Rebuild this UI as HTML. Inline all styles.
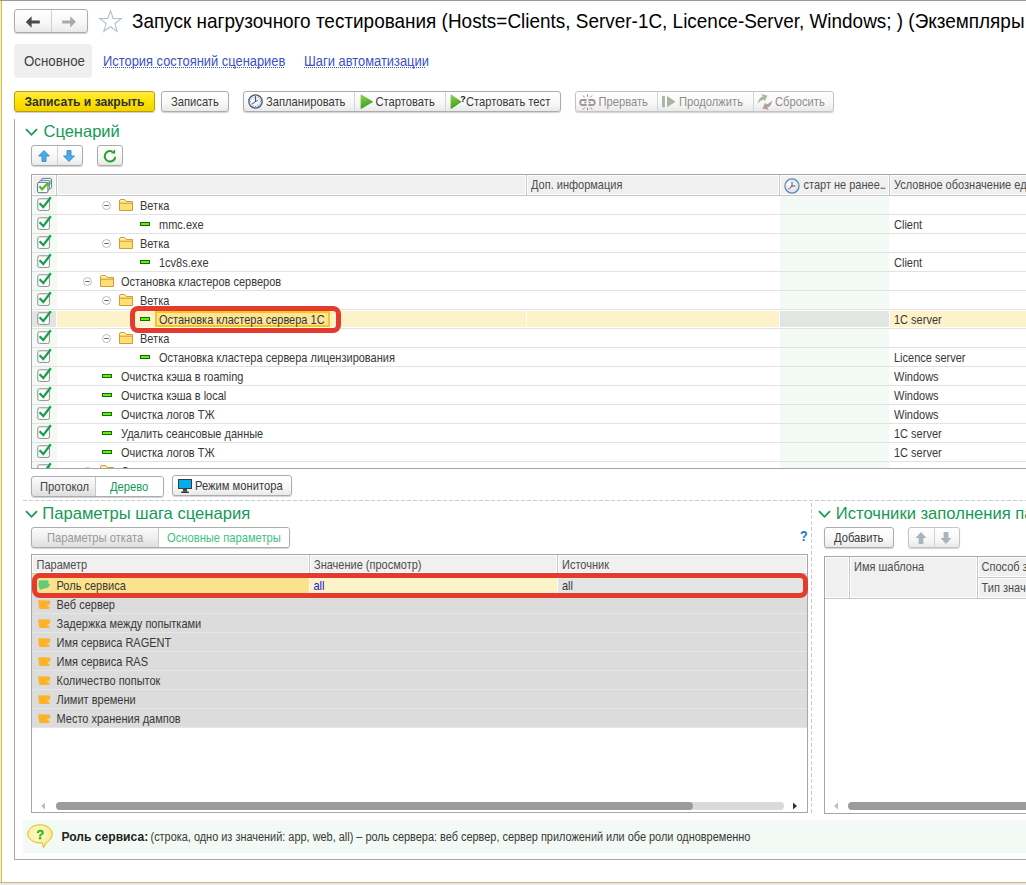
<!DOCTYPE html>
<html><head><meta charset="utf-8">
<style>
*{box-sizing:border-box;margin:0;padding:0}
html,body{width:1026px;height:885px;overflow:hidden;background:#fff}
body{position:relative;font-family:"Liberation Sans",sans-serif;font-size:11px;color:#333}
.a{position:absolute;white-space:nowrap}
svg.a{overflow:visible}
</style></head><body>
<div class="a" style="left:0px;top:0px;width:1026px;height:1px;background:#9a9a9a"></div>
<div class="a" style="left:0px;top:1px;width:1px;height:881px;background:#ffef9e"></div>
<div class="a" style="left:1px;top:1px;width:1px;height:881px;background:#cbba72"></div>
<div class="a" style="left:0px;top:882px;width:1026px;height:1px;background:#cbba72"></div>
<div class="a" style="left:0px;top:883px;width:1026px;height:2px;background:#e9e9ed"></div>
<div class="a" style="left:14px;top:9px;width:74px;height:24px;border:1px solid #acacac;border-radius:3px;background:linear-gradient(#ffffff 0%,#f7f7f7 60%,#e9e9e9 100%);box-shadow:0 1px 1px rgba(0,0,0,.18);"></div>
<div class="a" style="left:51px;top:10px;width:1px;height:22px;background:#d0d0d0"></div>
<svg class="a" style="left:25px;top:15.5px" width="16" height="12" viewBox="0 0 16 12"><path d="M0.8 6 L6.6 0.2 L6.6 4.5 L14.8 4.5 L14.8 7.4 L6.6 7.4 L6.6 11.8 Z" fill="#4a4a4a"/></svg>
<svg class="a" style="left:61px;top:15.5px" width="16" height="12" viewBox="0 0 16 12"><path d="M15 5.8 L9.2 0.2 L9.2 4.5 L1.2 4.5 L1.2 7.5 L9.2 7.5 L9.2 11.6 Z" fill="#a9a9a9"/></svg>
<svg class="a" style="left:98px;top:10px" width="26" height="23" viewBox="0 0 26 23"><path d="M12.50 0.70 L15.19 8.44 L23.38 8.60 L16.85 13.55 L19.22 21.40 L12.50 16.72 L5.78 21.40 L8.15 13.55 L1.62 8.60 L9.81 8.44 Z" fill="none" stroke="#b4bec8" stroke-width="1.1" stroke-linejoin="miter"/></svg>
<div class="a" style="left:132px;top:10.03px;font-size:18.95px;line-height:24px;color:#000;font-weight:normal;transform:scaleY(1.08);transform-origin:0 18.57px;">Запуск нагрузочного тестирования (Hosts=Clients, Server-1C, Licence-Server, Windows; ) (Экземпляры</div>
<div class="a" style="left:14px;top:44px;width:78px;height:34px;background:#efefef;border-radius:4px"></div>
<div class="a" style="left:24px;top:52.89px;font-size:13.3px;line-height:17px;color:#404040;font-weight:normal;transform:scaleY(1.1);transform-origin:0 13.11px;">Основное</div>
<div class="a" style="left:103px;top:53.03px;font-size:12.9px;line-height:17px;color:#3c50c6;font-weight:normal;transform:scaleY(1.1);transform-origin:0 12.97px;">История состояний сценариев</div>
<div class="a" style="left:103px;top:67px;width:181px;height:1px;background:repeating-linear-gradient(90deg,#3c50c6 0 1px,transparent 1px 2px)"></div>
<div class="a" style="left:304px;top:53.03px;font-size:12.9px;line-height:17px;color:#3c50c6;font-weight:normal;transform:scaleY(1.1);transform-origin:0 12.97px;">Шаги автоматизации</div>
<div class="a" style="left:304px;top:67px;width:122px;height:1px;background:repeating-linear-gradient(90deg,#3c50c6 0 1px,transparent 1px 2px)"></div>
<div class="a" style="left:14px;top:91px;width:141px;height:21px;border:1px solid #b9a000;border-radius:3px;background:linear-gradient(#feec48,#fde200 50%,#f2d300);box-shadow:0 1px 1px rgba(0,0,0,.2)"></div>
<div class="a" style="left:24.5px;top:93.81px;font-size:12.1px;line-height:16px;color:#30303a;font-weight:bold;transform:scaleY(1.12);transform-origin:0 12.19px;">Записать и закрыть</div>
<div class="a" style="left:161px;top:91px;width:68px;height:21px;border:1px solid #acacac;border-radius:3px;background:linear-gradient(#ffffff 0%,#f7f7f7 60%,#e9e9e9 100%);box-shadow:0 1px 1px rgba(0,0,0,.18);"></div>
<div class="a" style="left:171px;top:95.12px;font-size:11.2px;line-height:14px;color:#383838;font-weight:normal;transform:scaleY(1.12);transform-origin:0 10.88px;">Записать</div>
<div class="a" style="left:243px;top:91px;width:318px;height:21px;border:1px solid #acacac;border-radius:3px;background:linear-gradient(#ffffff 0%,#f7f7f7 60%,#e9e9e9 100%);box-shadow:0 1px 1px rgba(0,0,0,.18);"></div>
<div class="a" style="left:354px;top:92px;width:1px;height:19px;background:#d4d4d4"></div>
<div class="a" style="left:445px;top:92px;width:1px;height:19px;background:#d4d4d4"></div>
<svg class="a" style="left:248px;top:94px" width="15" height="15" viewBox="0 0 15 15"><defs><radialGradient id="clk" cx="0.35" cy="0.3" r="0.8"><stop offset="0" stop-color="#ffffff"/><stop offset="0.6" stop-color="#eef6fc"/><stop offset="1" stop-color="#bcd8ee"/></radialGradient></defs><circle cx="7.5" cy="7.5" r="6.7" fill="url(#clk)" stroke="#3e5d78" stroke-width="1.3"/><circle cx="12.60" cy="7.50" r="0.55" fill="#e04848"/><circle cx="11.92" cy="10.05" r="0.55" fill="#e04848"/><circle cx="10.05" cy="11.92" r="0.55" fill="#e04848"/><circle cx="7.50" cy="12.60" r="0.55" fill="#e04848"/><circle cx="4.95" cy="11.92" r="0.55" fill="#e04848"/><circle cx="3.08" cy="10.05" r="0.55" fill="#e04848"/><circle cx="2.40" cy="7.50" r="0.55" fill="#e04848"/><circle cx="3.08" cy="4.95" r="0.55" fill="#e04848"/><circle cx="4.95" cy="3.08" r="0.55" fill="#e04848"/><circle cx="7.50" cy="2.40" r="0.55" fill="#e04848"/><circle cx="10.05" cy="3.08" r="0.55" fill="#e04848"/><circle cx="11.92" cy="4.95" r="0.55" fill="#e04848"/><path d="M7.5 2.2 V7.9" stroke="#1f5f99" stroke-width="1.2"/><path d="M7.5 7.6 L3.8 10.2" stroke="#1f5f99" stroke-width="1"/><path d="M7.5 7.6 L10 6.2" stroke="#1f5f99" stroke-width="0.8"/></svg>
<div class="a" style="left:266px;top:95.12px;font-size:11.2px;line-height:14px;color:#383838;font-weight:normal;transform:scaleY(1.12);transform-origin:0 10.88px;">Запланировать</div>
<svg class="a" style="left:359.5px;top:93.8px" width="14" height="16" viewBox="0 0 14 16"><defs><linearGradient id="pg" x1="0" y1="0" x2="0.3" y2="1"><stop offset="0" stop-color="#8fd44a"/><stop offset="1" stop-color="#3e9e1e"/></linearGradient></defs><path d="M0.6 1.2 Q0.6 0.2 1.5 0.7 L12.6 7.2 Q13.4 7.7 12.6 8.2 L1.5 14.7 Q0.6 15.2 0.6 14.2 Z" fill="url(#pg)"/></svg>
<div class="a" style="left:375.5px;top:95.12px;font-size:11.2px;line-height:14px;color:#383838;font-weight:normal;transform:scaleY(1.12);transform-origin:0 10.88px;">Стартовать</div>
<svg class="a" style="left:449.5px;top:92px" width="18" height="18" viewBox="0 0 18 18"><path d="M0.6 3.2 Q0.6 2.2 1.5 2.7 L11 9.2 Q11.8 9.7 11 10.2 L1.5 16.7 Q0.6 17.2 0.6 16.2 Z" fill="url(#pg)"/><text x="10.2" y="9.8" font-family="Liberation Sans" font-weight="bold" font-size="9" fill="#111">?</text></svg>
<div class="a" style="left:466px;top:95.12px;font-size:11.2px;line-height:14px;color:#383838;font-weight:normal;transform:scaleY(1.12);transform-origin:0 10.88px;">Стартовать тест</div>
<div class="a" style="left:575px;top:91px;width:259px;height:21px;border:1px solid #c4c4c4;border-radius:3px;background:linear-gradient(#ffffff 0%,#f7f7f7 60%,#e9e9e9 100%);box-shadow:0 1px 1px rgba(0,0,0,.18);"></div>
<div class="a" style="left:657px;top:92px;width:1px;height:19px;background:#d4d4d4"></div>
<div class="a" style="left:753px;top:92px;width:1px;height:19px;background:#d4d4d4"></div>
<svg class="a" style="left:579px;top:94px" width="17" height="17" viewBox="0 0 17 17"><g stroke="#a07070" stroke-width="0.9"><path d="M8.5 0.5 V2.8"/><path d="M4 1.5 L5.6 3.3"/><path d="M13 1.5 L11.4 3.3"/><path d="M8.5 13.8 V16.2"/><path d="M4 15.5 L5.6 13.6"/><path d="M11.4 13.6 L13 15.5"/></g><path d="M7.6 6 H3.6 Q1.2 6 1.2 8.5 Q1.2 11 3.6 11 H7.6" fill="none" stroke="#9a9a9a" stroke-width="1.8"/><path d="M5.2 8.5 H7.5" stroke="#9a9a9a" stroke-width="1.6"/><path d="M9.4 6 H13.4 Q15.8 6 15.8 8.5 Q15.8 11 13.4 11 H9.4" fill="none" stroke="#9a9a9a" stroke-width="1.8"/><path d="M9.5 8.5 H11.8" stroke="#9a9a9a" stroke-width="1.6"/></svg>
<div class="a" style="left:598.5px;top:95.12px;font-size:11.2px;line-height:14px;color:#8c8c8c;font-weight:normal;transform:scaleY(1.12);transform-origin:0 10.88px;">Прервать</div>
<svg class="a" style="left:662px;top:95.7px" width="14" height="12" viewBox="0 0 14 12"><rect x="0" y="0.1" width="2.9" height="11.2" fill="#a9b5a2"/><path d="M5 0 L13.6 5.65 L5 11.3 Z" fill="#a9b5a2"/></svg>
<div class="a" style="left:679px;top:95.12px;font-size:11.2px;line-height:14px;color:#8c8c8c;font-weight:normal;transform:scaleY(1.12);transform-origin:0 10.88px;">Продолжить</div>
<svg class="a" style="left:757px;top:94px" width="16" height="16" viewBox="0 0 16 16"><path d="M0.8 9.6 Q1.6 3.4 5.9 2.5 L4.2 0 L10.4 1.4 L7.9 7.6 L7.1 5.4 Q3.6 6 0.8 9.6 Z" fill="#a8b9a0"/><path d="M15.2 6.4 Q14.4 12.6 10.1 13.5 L11.8 16 L5.6 14.6 L8.1 8.4 L8.9 10.6 Q12.4 10 15.2 6.4 Z" fill="#b29c9c"/></svg>
<div class="a" style="left:775px;top:95.12px;font-size:11.2px;line-height:14px;color:#8c8c8c;font-weight:normal;transform:scaleY(1.12);transform-origin:0 10.88px;">Сбросить</div>


<div class="a" style="left:14px;top:119px;width:1px;height:740px;background:#a8a8a8"></div>
<div class="a" style="left:14px;top:859px;width:1012px;height:1px;background:#a8a8a8"></div>
<svg class="a" style="left:25px;top:127.5px" width="13" height="9" viewBox="0 0 13 9"><path d="M1 1.2 L6.5 6.8 L12 1.2" fill="none" stroke="#139a55" stroke-width="1.8"/></svg>
<div class="a" style="left:43.5px;top:120.78px;font-size:16.5px;line-height:21px;color:#139a55;font-weight:normal;">Сценарий</div>
<div class="a" style="left:31px;top:145px;width:52px;height:21px;border:1px solid #acacac;border-radius:3px;background:linear-gradient(#ffffff 0%,#f7f7f7 60%,#e9e9e9 100%);box-shadow:0 1px 1px rgba(0,0,0,.18);"></div>
<div class="a" style="left:57px;top:146px;width:1px;height:19px;background:#d4d4d4"></div>
<svg class="a" style="left:38px;top:150px" width="12" height="12" viewBox="0 0 12 12"><path d="M6 0.6 L11.4 6 L8 6 L8 11.4 L4 11.4 L4 6 L0.6 6 Z" fill="#4aaee6" stroke="#2c86c8" stroke-width="0.9"/></svg>
<svg class="a" style="left:63px;top:150px" width="12" height="12" viewBox="0 0 12 12"><path d="M6 11.4 L11.4 6 L8 6 L8 0.6 L4 0.6 L4 6 L0.6 6 Z" fill="#4aaee6" stroke="#2c86c8" stroke-width="0.9"/></svg>
<div class="a" style="left:97px;top:145px;width:26px;height:21px;border:1px solid #acacac;border-radius:3px;background:linear-gradient(#ffffff 0%,#f7f7f7 60%,#e9e9e9 100%);box-shadow:0 1px 1px rgba(0,0,0,.18);"></div>
<svg class="a" style="left:103px;top:150px" width="14" height="13" viewBox="0 0 14 13"><path d="M12.3 6.9 A5.3 5.3 0 1 1 9.6 1.6" fill="none" stroke="#26a226" stroke-width="2"/><path d="M7.9 3.6 L12.1 3.6 L12.1 -0.4 Z" fill="#1e9e1e"/></svg>
<div class="a" style="left:31px;top:174px;width:1000px;height:295px;border:1px solid #a6a6a6;border-right:none;background:#fff;overflow:hidden"></div>
<div class="a" style="left:32px;top:175px;width:998px;height:20px;background:#fff"></div>
<div class="a" style="left:33px;top:176px;width:22px;height:18px;background:#f0f0f0"></div>
<div class="a" style="left:58px;top:176px;width:467px;height:18px;background:#f0f0f0"></div>
<div class="a" style="left:528px;top:176px;width:250px;height:18px;background:#f0f0f0"></div>
<div class="a" style="left:781px;top:176px;width:107px;height:18px;background:#f0f0f0"></div>
<div class="a" style="left:891px;top:176px;width:138px;height:18px;background:#f0f0f0"></div>
<div class="a" style="left:56px;top:175px;width:1px;height:20px;background:#c6c6c6"></div>
<div class="a" style="left:526px;top:175px;width:1px;height:20px;background:#c6c6c6"></div>
<div class="a" style="left:779px;top:175px;width:1px;height:20px;background:#c6c6c6"></div>
<div class="a" style="left:889px;top:175px;width:1px;height:20px;background:#c6c6c6"></div>
<div class="a" style="left:32px;top:195px;width:998px;height:1px;background:#c6c6c6"></div>
<svg class="a" style="left:37px;top:177px" width="16" height="17" viewBox="0 0 16 17"><rect x="4.5" y="1.4" width="10" height="10.2" rx="1.4" fill="#fff" stroke="#55738e" stroke-width="0.9"/><path d="M13.8 2.6 L13.8 7 L12.6 8.2 L12.6 4 Z" fill="#7cc860"/><rect x="2.6" y="3.3" width="9.8" height="9.9" rx="1.4" fill="#fff" stroke="#55738e" stroke-width="0.9"/><path d="M11.8 4.6 L11.8 9 L10.6 10.2 L10.6 6 Z" fill="#6cc050"/><rect x="0.6" y="5.3" width="10.3" height="10.4" rx="1.5" fill="#fff" stroke="#4f6e8a" stroke-width="1"/><path d="M2.4 9.2 L5.1 12.3 L11.2 5.8" fill="none" stroke="#4fba2e" stroke-width="2.3"/></svg>
<div class="a" style="left:531px;top:178.19px;font-size:11px;line-height:14px;color:#4d4d4d;font-weight:normal;transform:scaleY(1.12);transform-origin:0 10.81px;">Доп. информация</div>
<svg class="a" style="left:783.5px;top:177.5px" width="16" height="16" viewBox="0 0 16 16"><defs><radialGradient id="cg" cx="0.4" cy="0.35" r="0.7"><stop offset="0" stop-color="#ffffff"/><stop offset="1" stop-color="#c9e0f2"/></radialGradient></defs><circle cx="8" cy="8" r="7.1" fill="url(#cg)" stroke="#5a86aa" stroke-width="1.2"/><path d="M8 3.6 V8 H11.4" fill="none" stroke="#444" stroke-width="0.9"/><path d="M8 8 L4.6 11.3" stroke="#f01010" stroke-width="1.1" stroke-dasharray="1.2 0.6"/></svg>
<div class="a" style="left:803.5px;top:178.19px;font-size:11px;line-height:14px;color:#4d4d4d;font-weight:normal;transform:scaleY(1.12);transform-origin:0 10.81px;">старт не ранее<span style="letter-spacing:-1.5px">...</span></div>
<div class="a" style="left:894px;top:178.19px;font-size:11px;line-height:14px;color:#4d4d4d;font-weight:normal;transform:scaleY(1.12);transform-origin:0 10.81px;">Условное обозначение единицы</div>
<div class="a" style="left:32px;top:196px;width:25px;height:272px;background:#f3f9f4"></div>
<div class="a" style="left:780px;top:196px;width:109px;height:272px;background:#f3f9f4"></div>
<div class="a" style="left:32px;top:196px;width:994px;height:272px;overflow:hidden">
<svg class="a" style="left:5px;top:0px" width="15" height="15" viewBox="0 0 15 15"><rect x="0.8" y="2.8" width="11.6" height="11.6" rx="1.6" fill="#fff" stroke="#8c8c8c" stroke-width="1"/><path d="M2.6 7.3 L6.3 11.1 L13.8 1.3" fill="none" stroke="#12a04a" stroke-width="2.3"/></svg>
<svg class="a" style="left:70px;top:5px" width="9" height="9" viewBox="0 0 9 9"><circle cx="4.5" cy="4.5" r="4" fill="#fff" stroke="#bdbdbd" stroke-width="1"/><path d="M2.2 4.5 H6.8" stroke="#6a6a6a" stroke-width="1"/></svg>
<svg class="a" style="left:87px;top:3px" width="14" height="12" viewBox="0 0 14 12"><path d="M0.5 11.5 L0.5 2 Q0.5 0.5 2 0.5 L5.6 0.5 L7.4 2.5 L13.5 2.5 L13.5 11.5 Z" fill="#fedf72" stroke="#d49b3c" stroke-width="1"/><path d="M0.5 4.3 H13.5" stroke="#d49b3c" stroke-width="0.9"/><path d="M1.2 1.6 Q1.8 1.1 2.5 1.1 L5.2 1.1 L6.6 2.7 L1.2 2.7 Z" fill="#fff2b0"/></svg>
<div class="a" style="left:108px;top:3.19px;font-size:11px;line-height:14px;color:#383838;font-weight:normal;transform:scaleY(1.12);transform-origin:0 10.81px;">Ветка</div>
<div class="a" style="left:0px;top:18px;width:994px;height:1px;background:#e2e2e2"></div>
<svg class="a" style="left:5px;top:19px" width="15" height="15" viewBox="0 0 15 15"><rect x="0.8" y="2.8" width="11.6" height="11.6" rx="1.6" fill="#fff" stroke="#8c8c8c" stroke-width="1"/><path d="M2.6 7.3 L6.3 11.1 L13.8 1.3" fill="none" stroke="#12a04a" stroke-width="2.3"/></svg>
<div class="a" style="left:108px;top:26px;width:10px;height:4px;background:#62f000;border:1px solid #166a0e"></div>
<div class="a" style="left:127px;top:22.19px;font-size:11px;line-height:14px;color:#383838;font-weight:normal;transform:scaleY(1.12);transform-origin:0 10.81px;">mmc.exe</div>
<div class="a" style="left:862px;top:22.19px;font-size:11px;line-height:14px;color:#383838;font-weight:normal;transform:scaleY(1.12);transform-origin:0 10.81px;">Client</div>
<div class="a" style="left:0px;top:37px;width:994px;height:1px;background:#e2e2e2"></div>
<svg class="a" style="left:5px;top:38px" width="15" height="15" viewBox="0 0 15 15"><rect x="0.8" y="2.8" width="11.6" height="11.6" rx="1.6" fill="#fff" stroke="#8c8c8c" stroke-width="1"/><path d="M2.6 7.3 L6.3 11.1 L13.8 1.3" fill="none" stroke="#12a04a" stroke-width="2.3"/></svg>
<svg class="a" style="left:70px;top:43px" width="9" height="9" viewBox="0 0 9 9"><circle cx="4.5" cy="4.5" r="4" fill="#fff" stroke="#bdbdbd" stroke-width="1"/><path d="M2.2 4.5 H6.8" stroke="#6a6a6a" stroke-width="1"/></svg>
<svg class="a" style="left:87px;top:41px" width="14" height="12" viewBox="0 0 14 12"><path d="M0.5 11.5 L0.5 2 Q0.5 0.5 2 0.5 L5.6 0.5 L7.4 2.5 L13.5 2.5 L13.5 11.5 Z" fill="#fedf72" stroke="#d49b3c" stroke-width="1"/><path d="M0.5 4.3 H13.5" stroke="#d49b3c" stroke-width="0.9"/><path d="M1.2 1.6 Q1.8 1.1 2.5 1.1 L5.2 1.1 L6.6 2.7 L1.2 2.7 Z" fill="#fff2b0"/></svg>
<div class="a" style="left:108px;top:41.19px;font-size:11px;line-height:14px;color:#383838;font-weight:normal;transform:scaleY(1.12);transform-origin:0 10.81px;">Ветка</div>
<div class="a" style="left:0px;top:56px;width:994px;height:1px;background:#e2e2e2"></div>
<svg class="a" style="left:5px;top:57px" width="15" height="15" viewBox="0 0 15 15"><rect x="0.8" y="2.8" width="11.6" height="11.6" rx="1.6" fill="#fff" stroke="#8c8c8c" stroke-width="1"/><path d="M2.6 7.3 L6.3 11.1 L13.8 1.3" fill="none" stroke="#12a04a" stroke-width="2.3"/></svg>
<div class="a" style="left:108px;top:64px;width:10px;height:4px;background:#62f000;border:1px solid #166a0e"></div>
<div class="a" style="left:127px;top:60.19px;font-size:11px;line-height:14px;color:#383838;font-weight:normal;transform:scaleY(1.12);transform-origin:0 10.81px;">1cv8s.exe</div>
<div class="a" style="left:862px;top:60.19px;font-size:11px;line-height:14px;color:#383838;font-weight:normal;transform:scaleY(1.12);transform-origin:0 10.81px;">Client</div>
<div class="a" style="left:0px;top:75px;width:994px;height:1px;background:#e2e2e2"></div>
<svg class="a" style="left:5px;top:76px" width="15" height="15" viewBox="0 0 15 15"><rect x="0.8" y="2.8" width="11.6" height="11.6" rx="1.6" fill="#fff" stroke="#8c8c8c" stroke-width="1"/><path d="M2.6 7.3 L6.3 11.1 L13.8 1.3" fill="none" stroke="#12a04a" stroke-width="2.3"/></svg>
<svg class="a" style="left:51px;top:81px" width="9" height="9" viewBox="0 0 9 9"><circle cx="4.5" cy="4.5" r="4" fill="#fff" stroke="#bdbdbd" stroke-width="1"/><path d="M2.2 4.5 H6.8" stroke="#6a6a6a" stroke-width="1"/></svg>
<svg class="a" style="left:68px;top:79px" width="14" height="12" viewBox="0 0 14 12"><path d="M0.5 11.5 L0.5 2 Q0.5 0.5 2 0.5 L5.6 0.5 L7.4 2.5 L13.5 2.5 L13.5 11.5 Z" fill="#fedf72" stroke="#d49b3c" stroke-width="1"/><path d="M0.5 4.3 H13.5" stroke="#d49b3c" stroke-width="0.9"/><path d="M1.2 1.6 Q1.8 1.1 2.5 1.1 L5.2 1.1 L6.6 2.7 L1.2 2.7 Z" fill="#fff2b0"/></svg>
<div class="a" style="left:89px;top:79.19px;font-size:11px;line-height:14px;color:#383838;font-weight:normal;transform:scaleY(1.12);transform-origin:0 10.81px;">Остановка кластеров серверов</div>
<div class="a" style="left:0px;top:94px;width:994px;height:1px;background:#e2e2e2"></div>
<svg class="a" style="left:5px;top:95px" width="15" height="15" viewBox="0 0 15 15"><rect x="0.8" y="2.8" width="11.6" height="11.6" rx="1.6" fill="#fff" stroke="#8c8c8c" stroke-width="1"/><path d="M2.6 7.3 L6.3 11.1 L13.8 1.3" fill="none" stroke="#12a04a" stroke-width="2.3"/></svg>
<svg class="a" style="left:70px;top:100px" width="9" height="9" viewBox="0 0 9 9"><circle cx="4.5" cy="4.5" r="4" fill="#fff" stroke="#bdbdbd" stroke-width="1"/><path d="M2.2 4.5 H6.8" stroke="#6a6a6a" stroke-width="1"/></svg>
<svg class="a" style="left:87px;top:98px" width="14" height="12" viewBox="0 0 14 12"><path d="M0.5 11.5 L0.5 2 Q0.5 0.5 2 0.5 L5.6 0.5 L7.4 2.5 L13.5 2.5 L13.5 11.5 Z" fill="#fedf72" stroke="#d49b3c" stroke-width="1"/><path d="M0.5 4.3 H13.5" stroke="#d49b3c" stroke-width="0.9"/><path d="M1.2 1.6 Q1.8 1.1 2.5 1.1 L5.2 1.1 L6.6 2.7 L1.2 2.7 Z" fill="#fff2b0"/></svg>
<div class="a" style="left:108px;top:98.19px;font-size:11px;line-height:14px;color:#383838;font-weight:normal;transform:scaleY(1.12);transform-origin:0 10.81px;">Ветка</div>
<div class="a" style="left:0px;top:113px;width:994px;height:1px;background:#e2e2e2"></div>
<div class="a" style="left:0px;top:114px;width:994px;height:18px;background:#fff"></div>
<div class="a" style="left:0px;top:115px;width:24px;height:16px;background:#e2e6e2"></div>
<div class="a" style="left:25px;top:115px;width:469px;height:16px;background:#fdf2c9"></div>
<div class="a" style="left:495px;top:115px;width:252px;height:16px;background:#fdf2c9"></div>
<div class="a" style="left:748px;top:115px;width:109px;height:16px;background:#e2e6e2"></div>
<div class="a" style="left:858px;top:115px;width:140px;height:16px;background:#fdf2c9"></div>
<svg class="a" style="left:5px;top:114px" width="15" height="15" viewBox="0 0 15 15"><rect x="0.8" y="2.8" width="11.6" height="11.6" rx="1.6" fill="#fff" stroke="#8c8c8c" stroke-width="1"/><path d="M2.6 7.3 L6.3 11.1 L13.8 1.3" fill="none" stroke="#12a04a" stroke-width="2.3"/></svg>
<div class="a" style="left:108px;top:121px;width:10px;height:4px;background:#62f000;border:1px solid #166a0e"></div>
<div class="a" style="left:123px;top:115px;width:175px;height:16px;background:#fde497;border:2px solid #f6c81a"></div>
<div class="a" style="left:127px;top:117.19px;font-size:11px;line-height:14px;color:#383838;font-weight:normal;transform:scaleY(1.12);transform-origin:0 10.81px;">Остановка кластера сервера 1С</div>
<div class="a" style="left:862px;top:117.19px;font-size:11px;line-height:14px;color:#383838;font-weight:normal;transform:scaleY(1.12);transform-origin:0 10.81px;">1C server</div>
<div class="a" style="left:0px;top:132px;width:994px;height:1px;background:#e2e2e2"></div>
<svg class="a" style="left:5px;top:133px" width="15" height="15" viewBox="0 0 15 15"><rect x="0.8" y="2.8" width="11.6" height="11.6" rx="1.6" fill="#fff" stroke="#8c8c8c" stroke-width="1"/><path d="M2.6 7.3 L6.3 11.1 L13.8 1.3" fill="none" stroke="#12a04a" stroke-width="2.3"/></svg>
<svg class="a" style="left:70px;top:138px" width="9" height="9" viewBox="0 0 9 9"><circle cx="4.5" cy="4.5" r="4" fill="#fff" stroke="#bdbdbd" stroke-width="1"/><path d="M2.2 4.5 H6.8" stroke="#6a6a6a" stroke-width="1"/></svg>
<svg class="a" style="left:87px;top:136px" width="14" height="12" viewBox="0 0 14 12"><path d="M0.5 11.5 L0.5 2 Q0.5 0.5 2 0.5 L5.6 0.5 L7.4 2.5 L13.5 2.5 L13.5 11.5 Z" fill="#fedf72" stroke="#d49b3c" stroke-width="1"/><path d="M0.5 4.3 H13.5" stroke="#d49b3c" stroke-width="0.9"/><path d="M1.2 1.6 Q1.8 1.1 2.5 1.1 L5.2 1.1 L6.6 2.7 L1.2 2.7 Z" fill="#fff2b0"/></svg>
<div class="a" style="left:108px;top:136.19px;font-size:11px;line-height:14px;color:#383838;font-weight:normal;transform:scaleY(1.12);transform-origin:0 10.81px;">Ветка</div>
<div class="a" style="left:0px;top:151px;width:994px;height:1px;background:#e2e2e2"></div>
<svg class="a" style="left:5px;top:152px" width="15" height="15" viewBox="0 0 15 15"><rect x="0.8" y="2.8" width="11.6" height="11.6" rx="1.6" fill="#fff" stroke="#8c8c8c" stroke-width="1"/><path d="M2.6 7.3 L6.3 11.1 L13.8 1.3" fill="none" stroke="#12a04a" stroke-width="2.3"/></svg>
<div class="a" style="left:108px;top:159px;width:10px;height:4px;background:#62f000;border:1px solid #166a0e"></div>
<div class="a" style="left:127px;top:155.19px;font-size:11px;line-height:14px;color:#383838;font-weight:normal;transform:scaleY(1.12);transform-origin:0 10.81px;">Остановка кластера сервера лицензирования</div>
<div class="a" style="left:862px;top:155.19px;font-size:11px;line-height:14px;color:#383838;font-weight:normal;transform:scaleY(1.12);transform-origin:0 10.81px;">Licence server</div>
<div class="a" style="left:0px;top:170px;width:994px;height:1px;background:#e2e2e2"></div>
<svg class="a" style="left:5px;top:171px" width="15" height="15" viewBox="0 0 15 15"><rect x="0.8" y="2.8" width="11.6" height="11.6" rx="1.6" fill="#fff" stroke="#8c8c8c" stroke-width="1"/><path d="M2.6 7.3 L6.3 11.1 L13.8 1.3" fill="none" stroke="#12a04a" stroke-width="2.3"/></svg>
<div class="a" style="left:70px;top:178px;width:10px;height:4px;background:#62f000;border:1px solid #166a0e"></div>
<div class="a" style="left:89px;top:174.19px;font-size:11px;line-height:14px;color:#383838;font-weight:normal;transform:scaleY(1.12);transform-origin:0 10.81px;">Очистка кэша в roaming</div>
<div class="a" style="left:862px;top:174.19px;font-size:11px;line-height:14px;color:#383838;font-weight:normal;transform:scaleY(1.12);transform-origin:0 10.81px;">Windows</div>
<div class="a" style="left:0px;top:189px;width:994px;height:1px;background:#e2e2e2"></div>
<svg class="a" style="left:5px;top:190px" width="15" height="15" viewBox="0 0 15 15"><rect x="0.8" y="2.8" width="11.6" height="11.6" rx="1.6" fill="#fff" stroke="#8c8c8c" stroke-width="1"/><path d="M2.6 7.3 L6.3 11.1 L13.8 1.3" fill="none" stroke="#12a04a" stroke-width="2.3"/></svg>
<div class="a" style="left:70px;top:197px;width:10px;height:4px;background:#62f000;border:1px solid #166a0e"></div>
<div class="a" style="left:89px;top:193.19px;font-size:11px;line-height:14px;color:#383838;font-weight:normal;transform:scaleY(1.12);transform-origin:0 10.81px;">Очистка кэша в local</div>
<div class="a" style="left:862px;top:193.19px;font-size:11px;line-height:14px;color:#383838;font-weight:normal;transform:scaleY(1.12);transform-origin:0 10.81px;">Windows</div>
<div class="a" style="left:0px;top:208px;width:994px;height:1px;background:#e2e2e2"></div>
<svg class="a" style="left:5px;top:209px" width="15" height="15" viewBox="0 0 15 15"><rect x="0.8" y="2.8" width="11.6" height="11.6" rx="1.6" fill="#fff" stroke="#8c8c8c" stroke-width="1"/><path d="M2.6 7.3 L6.3 11.1 L13.8 1.3" fill="none" stroke="#12a04a" stroke-width="2.3"/></svg>
<div class="a" style="left:70px;top:216px;width:10px;height:4px;background:#62f000;border:1px solid #166a0e"></div>
<div class="a" style="left:89px;top:212.19px;font-size:11px;line-height:14px;color:#383838;font-weight:normal;transform:scaleY(1.12);transform-origin:0 10.81px;">Очистка логов ТЖ</div>
<div class="a" style="left:862px;top:212.19px;font-size:11px;line-height:14px;color:#383838;font-weight:normal;transform:scaleY(1.12);transform-origin:0 10.81px;">Windows</div>
<div class="a" style="left:0px;top:227px;width:994px;height:1px;background:#e2e2e2"></div>
<svg class="a" style="left:5px;top:228px" width="15" height="15" viewBox="0 0 15 15"><rect x="0.8" y="2.8" width="11.6" height="11.6" rx="1.6" fill="#fff" stroke="#8c8c8c" stroke-width="1"/><path d="M2.6 7.3 L6.3 11.1 L13.8 1.3" fill="none" stroke="#12a04a" stroke-width="2.3"/></svg>
<div class="a" style="left:70px;top:235px;width:10px;height:4px;background:#62f000;border:1px solid #166a0e"></div>
<div class="a" style="left:89px;top:231.19px;font-size:11px;line-height:14px;color:#383838;font-weight:normal;transform:scaleY(1.12);transform-origin:0 10.81px;">Удалить сеансовые данные</div>
<div class="a" style="left:862px;top:231.19px;font-size:11px;line-height:14px;color:#383838;font-weight:normal;transform:scaleY(1.12);transform-origin:0 10.81px;">1C server</div>
<div class="a" style="left:0px;top:246px;width:994px;height:1px;background:#e2e2e2"></div>
<svg class="a" style="left:5px;top:247px" width="15" height="15" viewBox="0 0 15 15"><rect x="0.8" y="2.8" width="11.6" height="11.6" rx="1.6" fill="#fff" stroke="#8c8c8c" stroke-width="1"/><path d="M2.6 7.3 L6.3 11.1 L13.8 1.3" fill="none" stroke="#12a04a" stroke-width="2.3"/></svg>
<div class="a" style="left:70px;top:254px;width:10px;height:4px;background:#62f000;border:1px solid #166a0e"></div>
<div class="a" style="left:89px;top:250.19px;font-size:11px;line-height:14px;color:#383838;font-weight:normal;transform:scaleY(1.12);transform-origin:0 10.81px;">Очистка логов ТЖ</div>
<div class="a" style="left:862px;top:250.19px;font-size:11px;line-height:14px;color:#383838;font-weight:normal;transform:scaleY(1.12);transform-origin:0 10.81px;">1C server</div>
<div class="a" style="left:0px;top:265px;width:994px;height:1px;background:#e2e2e2"></div>
<svg class="a" style="left:5px;top:266px" width="15" height="15" viewBox="0 0 15 15"><rect x="0.8" y="2.8" width="11.6" height="11.6" rx="1.6" fill="#fff" stroke="#8c8c8c" stroke-width="1"/><path d="M2.6 7.3 L6.3 11.1 L13.8 1.3" fill="none" stroke="#12a04a" stroke-width="2.3"/></svg>
<svg class="a" style="left:51px;top:271px" width="9" height="9" viewBox="0 0 9 9"><circle cx="4.5" cy="4.5" r="4" fill="#fff" stroke="#bdbdbd" stroke-width="1"/><path d="M2.2 4.5 H6.8" stroke="#6a6a6a" stroke-width="1"/></svg>
<svg class="a" style="left:68px;top:269px" width="14" height="12" viewBox="0 0 14 12"><path d="M0.5 11.5 L0.5 2 Q0.5 0.5 2 0.5 L5.6 0.5 L7.4 2.5 L13.5 2.5 L13.5 11.5 Z" fill="#fedf72" stroke="#d49b3c" stroke-width="1"/><path d="M0.5 4.3 H13.5" stroke="#d49b3c" stroke-width="0.9"/><path d="M1.2 1.6 Q1.8 1.1 2.5 1.1 L5.2 1.1 L6.6 2.7 L1.2 2.7 Z" fill="#fff2b0"/></svg>
<div class="a" style="left:89px;top:269.19px;font-size:11px;line-height:14px;color:#383838;font-weight:normal;transform:scaleY(1.12);transform-origin:0 10.81px;">Остановка</div>
<div class="a" style="left:0px;top:284px;width:994px;height:1px;background:#e2e2e2"></div>
</div>
<div class="a" style="left:130px;top:306px;width:211px;height:27px;border:5px solid #e43b2f;border-radius:8px"></div>
<div class="a" style="left:31px;top:476px;width:133px;height:21px;border:1px solid #acacac;border-radius:3px;background:linear-gradient(#ffffff 0%,#f7f7f7 60%,#e9e9e9 100%);box-shadow:0 1px 1px rgba(0,0,0,.18);background:linear-gradient(#fbfbfb,#efefef 50%,#dedede)"></div>
<div class="a" style="left:95px;top:477px;width:68px;height:19px;background:#fff;border-radius:0 2px 2px 0"></div>
<div class="a" style="left:95px;top:477px;width:1px;height:19px;background:#c8c8c8"></div>
<div class="a" style="left:40px;top:480.12px;font-size:11.2px;line-height:14px;color:#444;font-weight:normal;transform:scaleY(1.12);transform-origin:0 10.88px;">Протокол</div>
<div class="a" style="left:110px;top:480.12px;font-size:11.2px;line-height:14px;color:#139a55;font-weight:normal;transform:scaleY(1.12);transform-origin:0 10.88px;">Дерево</div>
<div class="a" style="left:172px;top:475px;width:120px;height:21px;border:1px solid #acacac;border-radius:3px;background:linear-gradient(#ffffff 0%,#f7f7f7 60%,#e9e9e9 100%);box-shadow:0 1px 1px rgba(0,0,0,.18);"></div>
<svg class="a" style="left:178px;top:479px" width="14" height="14" viewBox="0 0 14 14"><rect x="0.5" y="0.5" width="13" height="9" fill="#00aeef" stroke="#3c3c3c" stroke-width="1"/><rect x="5" y="10" width="4" height="2.6" fill="#444"/><rect x="3" y="12.4" width="8" height="1.6" rx="0.8" fill="#333"/></svg>
<div class="a" style="left:195px;top:479.12px;font-size:11.2px;line-height:14px;color:#383838;font-weight:normal;transform:scaleY(1.12);transform-origin:0 10.88px;">Режим монитора</div>
<div class="a" style="left:23px;top:500px;width:1003px;height:1px;background:repeating-linear-gradient(90deg,#cbcbcb 0 4px,transparent 4px 6px)"></div>
<div class="a" style="left:811px;top:503px;width:1px;height:312px;background:repeating-linear-gradient(180deg,#cbcbcb 0 4px,transparent 4px 6px)"></div>
<svg class="a" style="left:25px;top:509.5px" width="13" height="9" viewBox="0 0 13 9"><path d="M1 1.2 L6.5 6.8 L12 1.2" fill="none" stroke="#139a55" stroke-width="1.8"/></svg>
<div class="a" style="left:42.3px;top:502.75px;font-size:16.6px;line-height:21px;color:#139a55;font-weight:normal;">Параметры шага сценария</div>
<div class="a" style="left:31px;top:527px;width:259px;height:21px;border:1px solid #acacac;border-radius:3px;background:linear-gradient(#ffffff 0%,#f7f7f7 60%,#e9e9e9 100%);box-shadow:0 1px 1px rgba(0,0,0,.18);background:linear-gradient(#fbfbfb,#efefef 50%,#dedede)"></div>
<div class="a" style="left:158px;top:528px;width:131px;height:19px;background:#fff;border-radius:0 2px 2px 0"></div>
<div class="a" style="left:158px;top:528px;width:1px;height:19px;background:#c8c8c8"></div>
<div class="a" style="left:47px;top:531.12px;font-size:11.2px;line-height:14px;color:#999;font-weight:normal;transform:scaleY(1.12);transform-origin:0 10.88px;">Параметры отката</div>
<div class="a" style="left:167px;top:531.12px;font-size:11.2px;line-height:14px;color:#3fbf7f;font-weight:normal;transform:scaleY(1.12);transform-origin:0 10.88px;">Основные параметры</div>
<div class="a" style="left:800px;top:528.67px;font-size:12.5px;line-height:16px;color:#1a78c8;font-weight:bold;transform:scaleY(1.12);transform-origin:0 12.33px;">?</div>
<div class="a" style="left:31px;top:554px;width:777px;height:259px;border:1px solid #a6a6a6;background:#fff"></div>
<div class="a" style="left:32px;top:555px;width:775px;height:18px;background:#fff"></div>
<div class="a" style="left:33px;top:556px;width:275px;height:16px;background:#f0f0f0"></div>
<div class="a" style="left:311px;top:556px;width:245px;height:16px;background:#f0f0f0"></div>
<div class="a" style="left:559px;top:556px;width:247px;height:16px;background:#f0f0f0"></div>
<div class="a" style="left:309px;top:555px;width:1px;height:18px;background:#c6c6c6"></div>
<div class="a" style="left:557px;top:555px;width:1px;height:18px;background:#c6c6c6"></div>
<div class="a" style="left:32px;top:573px;width:775px;height:1px;background:#c6c6c6"></div>
<div class="a" style="left:36.5px;top:557.69px;font-size:11px;line-height:14px;color:#4d4d4d;font-weight:normal;transform:scaleY(1.12);transform-origin:0 10.81px;">Параметр</div>
<div class="a" style="left:314px;top:557.69px;font-size:11px;line-height:14px;color:#4d4d4d;font-weight:normal;transform:scaleY(1.12);transform-origin:0 10.81px;">Значение (просмотр)</div>
<div class="a" style="left:562px;top:557.69px;font-size:11px;line-height:14px;color:#4d4d4d;font-weight:normal;transform:scaleY(1.12);transform-origin:0 10.81px;">Источник</div>
<div class="a" style="left:32px;top:574px;width:277px;height:21px;background:#fde28e"></div>
<div class="a" style="left:310px;top:574px;width:247px;height:21px;background:#fdf2c8"></div>
<div class="a" style="left:558px;top:574px;width:249px;height:21px;background:#e2e5e3"></div>
<div class="a" style="left:309px;top:574px;width:1px;height:21px;background:#fff"></div>
<div class="a" style="left:557px;top:574px;width:1px;height:21px;background:#fff"></div>
<svg class="a" style="left:38px;top:580px" width="13" height="10" viewBox="0 0 13 10"><path d="M0.6 0.6 L10.3 0.2 L10.6 3.8 L12.6 5 L10.6 6.2 L10.3 7.6 L3.5 9.2 L1.8 9.9 L1.2 7.2 L0 6.6 L1 5.6 L0 4 L0.9 3.2 Z" fill="#5fcc7c"/></svg>
<div class="a" style="left:56.5px;top:579.19px;font-size:11px;line-height:14px;color:#383838;font-weight:normal;transform:scaleY(1.12);transform-origin:0 10.81px;">Роль сервиса</div>
<div class="a" style="left:32px;top:595px;width:775px;height:19px;background:#dcdcdc"></div>
<div class="a" style="left:32px;top:613px;width:775px;height:1px;background:#e6e6e6"></div>
<svg class="a" style="left:38px;top:600px" width="13" height="10" viewBox="0 0 13 10"><path d="M0.2 0.2 L11.6 0.4 L12.8 2.2 L11.6 3.4 L12.2 4.6 L8.6 5.4 L11.8 7.2 L11 9 L1.6 9 L0.8 7.2 Z" fill="#fdb227"/></svg>
<div class="a" style="left:56.5px;top:598.19px;font-size:11px;line-height:14px;color:#383838;font-weight:normal;transform:scaleY(1.12);transform-origin:0 10.81px;">Веб сервер</div>
<div class="a" style="left:32px;top:614px;width:775px;height:19px;background:#dcdcdc"></div>
<div class="a" style="left:32px;top:632px;width:775px;height:1px;background:#e6e6e6"></div>
<svg class="a" style="left:38px;top:619px" width="13" height="10" viewBox="0 0 13 10"><path d="M0.2 0.2 L11.6 0.4 L12.8 2.2 L11.6 3.4 L12.2 4.6 L8.6 5.4 L11.8 7.2 L11 9 L1.6 9 L0.8 7.2 Z" fill="#fdb227"/></svg>
<div class="a" style="left:56.5px;top:617.19px;font-size:11px;line-height:14px;color:#383838;font-weight:normal;transform:scaleY(1.12);transform-origin:0 10.81px;">Задержка между попытками</div>
<div class="a" style="left:32px;top:633px;width:775px;height:19px;background:#dcdcdc"></div>
<div class="a" style="left:32px;top:651px;width:775px;height:1px;background:#e6e6e6"></div>
<svg class="a" style="left:38px;top:638px" width="13" height="10" viewBox="0 0 13 10"><path d="M0.2 0.2 L11.6 0.4 L12.8 2.2 L11.6 3.4 L12.2 4.6 L8.6 5.4 L11.8 7.2 L11 9 L1.6 9 L0.8 7.2 Z" fill="#fdb227"/></svg>
<div class="a" style="left:56.5px;top:636.19px;font-size:11px;line-height:14px;color:#383838;font-weight:normal;transform:scaleY(1.12);transform-origin:0 10.81px;">Имя сервиса RAGENT</div>
<div class="a" style="left:32px;top:652px;width:775px;height:19px;background:#dcdcdc"></div>
<div class="a" style="left:32px;top:670px;width:775px;height:1px;background:#e6e6e6"></div>
<svg class="a" style="left:38px;top:657px" width="13" height="10" viewBox="0 0 13 10"><path d="M0.2 0.2 L11.6 0.4 L12.8 2.2 L11.6 3.4 L12.2 4.6 L8.6 5.4 L11.8 7.2 L11 9 L1.6 9 L0.8 7.2 Z" fill="#fdb227"/></svg>
<div class="a" style="left:56.5px;top:655.19px;font-size:11px;line-height:14px;color:#383838;font-weight:normal;transform:scaleY(1.12);transform-origin:0 10.81px;">Имя сервиса RAS</div>
<div class="a" style="left:32px;top:671px;width:775px;height:19px;background:#dcdcdc"></div>
<div class="a" style="left:32px;top:689px;width:775px;height:1px;background:#e6e6e6"></div>
<svg class="a" style="left:38px;top:676px" width="13" height="10" viewBox="0 0 13 10"><path d="M0.2 0.2 L11.6 0.4 L12.8 2.2 L11.6 3.4 L12.2 4.6 L8.6 5.4 L11.8 7.2 L11 9 L1.6 9 L0.8 7.2 Z" fill="#fdb227"/></svg>
<div class="a" style="left:56.5px;top:674.19px;font-size:11px;line-height:14px;color:#383838;font-weight:normal;transform:scaleY(1.12);transform-origin:0 10.81px;">Количество попыток</div>
<div class="a" style="left:32px;top:690px;width:775px;height:19px;background:#dcdcdc"></div>
<div class="a" style="left:32px;top:708px;width:775px;height:1px;background:#e6e6e6"></div>
<svg class="a" style="left:38px;top:695px" width="13" height="10" viewBox="0 0 13 10"><path d="M0.2 0.2 L11.6 0.4 L12.8 2.2 L11.6 3.4 L12.2 4.6 L8.6 5.4 L11.8 7.2 L11 9 L1.6 9 L0.8 7.2 Z" fill="#fdb227"/></svg>
<div class="a" style="left:56.5px;top:693.19px;font-size:11px;line-height:14px;color:#383838;font-weight:normal;transform:scaleY(1.12);transform-origin:0 10.81px;">Лимит времени</div>
<div class="a" style="left:32px;top:709px;width:775px;height:19px;background:#dcdcdc"></div>
<div class="a" style="left:32px;top:727px;width:775px;height:1px;background:#e6e6e6"></div>
<svg class="a" style="left:38px;top:714px" width="13" height="10" viewBox="0 0 13 10"><path d="M0.2 0.2 L11.6 0.4 L12.8 2.2 L11.6 3.4 L12.2 4.6 L8.6 5.4 L11.8 7.2 L11 9 L1.6 9 L0.8 7.2 Z" fill="#fdb227"/></svg>
<div class="a" style="left:56.5px;top:712.19px;font-size:11px;line-height:14px;color:#383838;font-weight:normal;transform:scaleY(1.12);transform-origin:0 10.81px;">Место хранения дампов</div>
<div class="a" style="left:313.5px;top:579.19px;font-size:11px;line-height:14px;color:#1a1acc;font-weight:normal;transform:scaleY(1.12);transform-origin:0 10.81px;">all</div>
<div class="a" style="left:562px;top:579.19px;font-size:11px;line-height:14px;color:#383838;font-weight:normal;transform:scaleY(1.12);transform-origin:0 10.81px;">all</div>
<div class="a" style="left:32px;top:573px;width:776px;height:25px;border:5px solid #e43b2f;border-radius:8px"></div>
<svg class="a" style="left:40px;top:802px" width="6" height="8" viewBox="0 0 6 8"><path d="M5 0.5 L1 4 L5 7.5 Z" fill="#bdbdbd"/></svg>
<div class="a" style="left:56px;top:802px;width:728px;height:8px;background:#dadada;border-radius:4px"></div>
<div class="a" style="left:56px;top:802px;width:637px;height:8px;background:#9b9b9b;border-radius:4px"></div>
<svg class="a" style="left:792px;top:802px" width="6" height="8" viewBox="0 0 6 8"><path d="M1 0.5 L5 4 L1 7.5 Z" fill="#333"/></svg>
<svg class="a" style="left:818px;top:509.5px" width="13" height="9" viewBox="0 0 13 9"><path d="M1 1.2 L6.5 6.8 L12 1.2" fill="none" stroke="#139a55" stroke-width="1.8"/></svg>
<div class="a" style="left:835.8px;top:502.75px;font-size:16.6px;line-height:21px;color:#139a55;font-weight:normal;">Источники заполнения параметров</div>
<div class="a" style="left:824px;top:527px;width:70px;height:21px;border:1px solid #acacac;border-radius:3px;background:linear-gradient(#ffffff 0%,#f7f7f7 60%,#e9e9e9 100%);box-shadow:0 1px 1px rgba(0,0,0,.18);"></div>
<div class="a" style="left:834px;top:531.12px;font-size:11.2px;line-height:14px;color:#383838;font-weight:normal;transform:scaleY(1.12);transform-origin:0 10.88px;">Добавить</div>
<div class="a" style="left:908px;top:527px;width:52px;height:21px;border:1px solid #c4c4c4;border-radius:3px;background:linear-gradient(#ffffff 0%,#f7f7f7 60%,#e9e9e9 100%);box-shadow:0 1px 1px rgba(0,0,0,.18);"></div>
<div class="a" style="left:934px;top:528px;width:1px;height:19px;background:#d4d4d4"></div>
<svg class="a" style="left:914.5px;top:532px" width="12" height="12" viewBox="0 0 12 12"><path d="M6 0 L11.5 6 L8.4 6 L8.4 12 L3.6 12 L3.6 6 L0.5 6 Z" fill="#a9b5bd"/></svg>
<svg class="a" style="left:939.5px;top:532px" width="12" height="12" viewBox="0 0 12 12"><path d="M6 12 L11.5 6 L8.4 6 L8.4 0 L3.6 0 L3.6 6 L0.5 6 Z" fill="#a9b5bd"/></svg>
<div class="a" style="left:824px;top:556px;width:210px;height:258px;border:1px solid #a6a6a6;border-right:none;background:#fff"></div>
<div class="a" style="left:825px;top:557px;width:205px;height:41px;background:#fff"></div>
<div class="a" style="left:826px;top:558px;width:22px;height:39px;background:#f0f0f0"></div>
<div class="a" style="left:851px;top:558px;width:125px;height:39px;background:#f0f0f0"></div>
<div class="a" style="left:979px;top:558px;width:50px;height:39px;background:#f0f0f0"></div>
<div class="a" style="left:849px;top:557px;width:1px;height:41px;background:#c6c6c6"></div>
<div class="a" style="left:977px;top:557px;width:1px;height:41px;background:#c6c6c6"></div>
<div class="a" style="left:825px;top:598px;width:205px;height:1px;background:#c6c6c6"></div>
<div class="a" style="left:978px;top:576px;width:50px;height:1px;background:#fff"></div>
<div class="a" style="left:978px;top:577px;width:50px;height:1px;background:#c6c6c6"></div>
<div class="a" style="left:978px;top:578px;width:50px;height:1px;background:#fff"></div>
<div class="a" style="left:854px;top:559.69px;font-size:11px;line-height:14px;color:#4d4d4d;font-weight:normal;transform:scaleY(1.12);transform-origin:0 10.81px;">Имя шаблона</div>
<div class="a" style="left:981.5px;top:559.69px;font-size:11px;line-height:14px;color:#4d4d4d;font-weight:normal;transform:scaleY(1.12);transform-origin:0 10.81px;">Способ заполнения</div>
<div class="a" style="left:981.5px;top:581.19px;font-size:11px;line-height:14px;color:#4d4d4d;font-weight:normal;transform:scaleY(1.12);transform-origin:0 10.81px;">Тип значения</div>
<svg class="a" style="left:833px;top:802px" width="6" height="8" viewBox="0 0 6 8"><path d="M5 0.5 L1 4 L5 7.5 Z" fill="#bdbdbd"/></svg>
<div class="a" style="left:848px;top:802px;width:200px;height:8px;background:#9b9b9b;border-radius:4px"></div>
<div class="a" style="left:23px;top:820px;width:1003px;height:33px;background:#f3f9f5"></div>
<svg class="a" style="left:26.5px;top:823.5px" width="27" height="26" viewBox="0 0 27 26"><defs><radialGradient id="hg" cx="0.45" cy="0.4" r="0.6"><stop offset="0" stop-color="#fffbd8"/><stop offset="0.7" stop-color="#fdf09a"/><stop offset="1" stop-color="#f8e070"/></radialGradient></defs><path d="M13 0.8 C19.8 0.8 25.3 4.9 25.3 9.8 C25.3 14.2 21.5 17.6 19.6 18.3 L16.5 23.6 L15.2 18.8 C14.8 18.9 13.9 18.9 13 18.9 C6.2 18.9 0.7 14.8 0.7 9.8 C0.7 4.9 6.2 0.8 13 0.8 Z" fill="url(#hg)" stroke="#dcbc2c" stroke-width="1"/><text x="9.2" y="14.6" font-family="Liberation Sans" font-weight="bold" font-size="13" fill="#2ad010" stroke="#0e8a00" stroke-width="0.3">?</text></svg>
<div class="a" style="left:61.5px;top:828.81px;font-size:12.1px;line-height:16px;color:#222;font-weight:bold;transform:scaleY(1.12);transform-origin:0 12.19px;">Роль сервиса:</div>
<div class="a" style="left:150.5px;top:830.21px;font-size:10.93px;line-height:14px;color:#383838;font-weight:normal;transform:scaleY(1.12);transform-origin:0 10.79px;">(строка, одно из значений: app, web, all) – роль сервера: веб сервер, сервер приложений или обе роли одновременно</div>
</body></html>
